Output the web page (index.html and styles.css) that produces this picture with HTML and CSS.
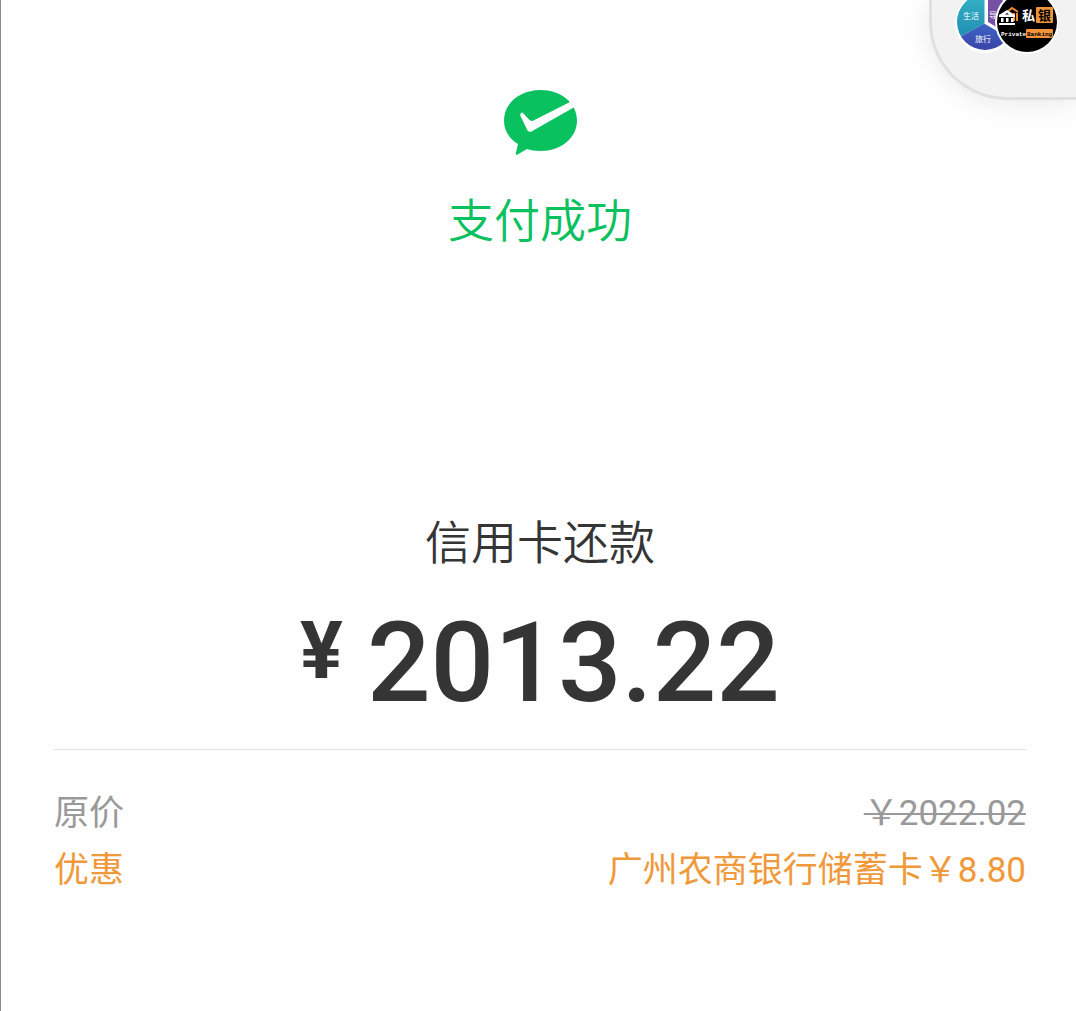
FILE: index.html
```html
<!DOCTYPE html>
<html lang="zh-CN">
<head>
<meta charset="utf-8">
<meta name="viewport" content="width=device-width, initial-scale=1">
<title>支付成功</title>
<link rel="stylesheet" href="styles.css">
</head>
<body>
<main class="page">
  <header class="status">
    <svg class="status-icon" viewBox="0 0 74 68" aria-hidden="true">
      <path fill="#0ac160" d="M37.500 1C58 1 74 14 74 31.500S58 62 37.500 62C32 62 27.500 61.300 24 60L14.500 65.500Q12.500 66.500 12.800 64.500L15 55C6 49.500 1 41.500 1 31.500C1 14 17 1 37.500 1Z"/>
      <path fill="#fff" d="M19 23.500Q16.500 24.500 17.500 27L24.500 41.500Q26 43.500 28.500 42.500L71.500 18L68 12.500L30.500 31.500Q28.500 32.500 26.500 31L20 24Z"/>
    </svg>
    <h1 class="status-text">支付成功</h1>
  </header>

  <section class="payment">
    <h2 class="payee">信用卡还款</h2>
    <p class="amount"><span class="currency">¥</span><span>2013.22</span></p>
  </section>

  <dl class="details">
    <div class="row">
      <dt>原价</dt>
      <dd><s>￥2022.02</s></dd>
    </div>
    <div class="row discount">
      <dt>优惠</dt>
      <dd>广州农商银行储蓄卡￥8.80</dd>
    </div>
  </dl>
</main>

<aside class="floating">
  <svg class="avatars" viewBox="0 0 104 56" aria-hidden="true">
    <defs>
      <clipPath id="left-disc"><circle cx="31" cy="22" r="28"/></clipPath>
      <clipPath id="right-disc"><circle cx="73" cy="22" r="30"/></clipPath>
      <linearGradient id="teal" x1="0" y1="0" x2="0" y2="1"><stop offset="0" stop-color="#35b5c8"/><stop offset="1" stop-color="#218eb2"/></linearGradient>
      <linearGradient id="blue" x1="0" y1="0" x2="0" y2="1"><stop offset="0" stop-color="#3c66c6"/><stop offset="1" stop-color="#3a3ca0"/></linearGradient>
    </defs>
    <circle cx="31" cy="23" r="30" fill="#fff"/>
    <g clip-path="url(#left-disc)">
      <path fill="url(#teal)" d="M0-10H31V23L4 38H0Z"/>
      <path fill="#7650a5" d="M34-10H64V40L34 22Z"/>
      <path fill="url(#blue)" d="M4 38L31 23L62 41V56H4Z"/>
      <path stroke="#fff" stroke-width="3" fill="none" d="M32-8V23L60 39"/>
    </g>
    <g class="left-label"><text x="9" y="19">生活</text><text x="21" y="42">旅行</text><text x="35" y="18">导</text></g>
    <circle cx="73" cy="22" r="32" fill="#fff"/>
    <g clip-path="url(#right-disc)">
      <rect x="43" y="-8" width="60" height="60"/>
      <path fill="none" stroke="#e98a2b" stroke-width="2" d="M53 12L58 8L64 12M60 13V21M63 13V21"/>
      <path fill="#fff" fill-rule="evenodd" d="M45 15L53 10L61 15V17H45ZM51 14.500H55L53 13ZM47 18H49.500V22H47ZM52 18H54.500V22H52ZM57 18H59.500V22H57ZM45 23H61V25H45Z"/>
      <rect x="82" y="7" width="17" height="16" rx="1" fill="#f1943b"/>
      <rect x="72" y="29" width="27" height="9" rx="1" fill="#f1943b"/>
    </g>
    <g class="bank-label"><text x="68" y="20" fill="#fff">私</text><text x="84" y="20">银</text></g>
    <g class="bank-sub"><text x="47" y="36" fill="#fff">Private</text><text x="73" y="36">Banking</text></g>
  </svg>
</aside>
</body>
</html>
```
FILE: styles.css
```css
* {
  box-sizing: border-box;
}

body {
  margin: 0;
  min-height: 100vh;
  background: #fefefe;
  border-left: 1px solid #8a8a8a;
  color: #353535;
  font-family: Roboto, "Noto Sans CJK SC", sans-serif;
  font-weight: 400;
  overflow-x: hidden;
}

h1, h2, p, dl, dd {
  margin: 0;
  font-weight: inherit;
}

.page {
  padding: 89px 50px 48px 53px;
}

.status,
.payment {
  display: flex;
  flex-direction: column;
  align-items: center;
}

.status-icon {
  width: 74px;
  height: 68px;
}

.status-text,
.payee {
  font-size: 46px;
  font-weight: 350;
  line-height: 64px;
}

.status-text {
  margin-top: 32px;
  color: #0ac160;
}

.payment {
  margin-top: 258px;
  padding-bottom: 24px;
  border-bottom: 1px solid #e2e2e2;
}

.amount {
  display: flex;
  align-items: flex-start;
  gap: 24px;
  margin-top: 26px;
  font-size: 112px;
  font-weight: 500;
  line-height: 124px;
}

.currency {
  font-size: 80px;
  font-weight: 700;
  line-height: 100px;
}

.details {
  padding-top: 35px;
  color: #999;
  font-size: 35px;
  line-height: 57px;
}

.row {
  display: flex;
  justify-content: space-between;
}

.row s {
  text-decoration-thickness: 2px;
}

.discount {
  color: #f0993a;
}

.floating {
  position: absolute;
  top: 0;
  right: 0;
  width: 147px;
  height: 100px;
  padding-left: 22px;
  background: #f2f2f2;
  border: solid #e0e0e0;
  border-width: 0 0 3px 3px;
  border-bottom-left-radius: 78px;
  box-shadow: 0 4px 24px rgba(0, 0, 0, 0.08);
}

.avatars {
  display: block;
  width: 104px;
  height: 56px;
}

.left-label {
  fill: #fff;
  font-size: 8px;
}

.bank-label {
  font-size: 13px;
  font-weight: 700;
}

.bank-sub {
  font-family: "Liberation Mono", monospace;
  font-size: 6px;
  font-weight: 700;
}
```
